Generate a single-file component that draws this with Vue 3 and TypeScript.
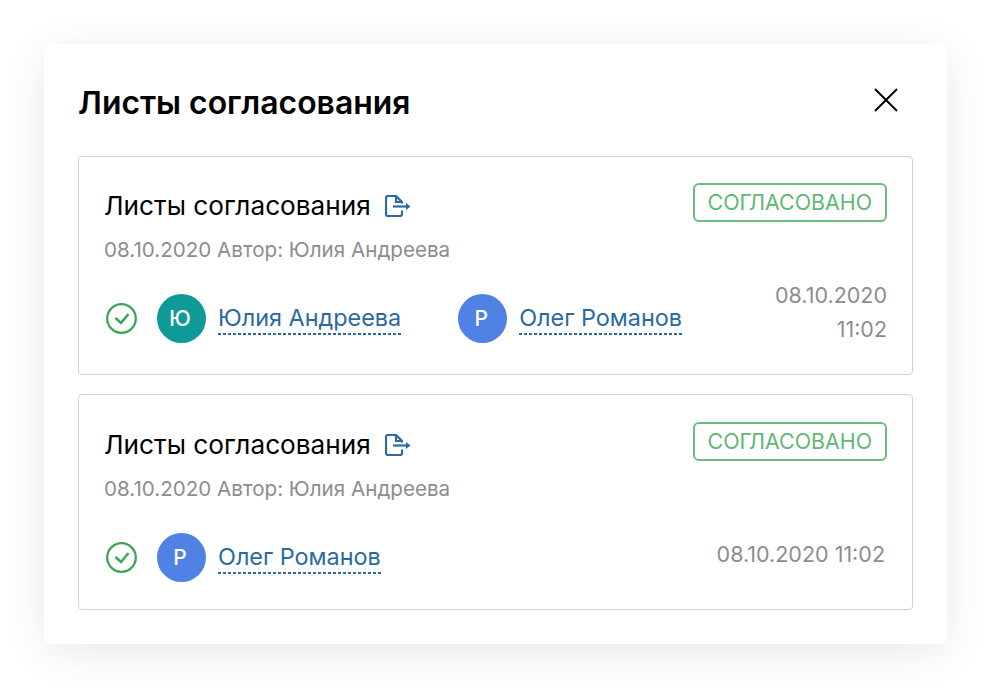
<template>
  <div class="page">
    <div class="modal">
      <div class="modal-head">
        <h1>Листы согласования</h1>
        <button class="close" aria-label="Закрыть">
          <svg width="26" height="26" viewBox="0 0 26 26" fill="none" stroke="#000" stroke-width="2">
            <path d="M2 2 L24 24 M24 2 L2 24" />
          </svg>
        </button>
      </div>

      <div v-for="(sheet, i) in sheets" :key="i" class="card">
        <div class="card-top">
          <div>
            <div class="card-title">
              <span>Листы согласования</span>
              <svg class="export" width="26" height="22" viewBox="0 0 26 22" fill="none" stroke="#2a6ba3" stroke-width="2.2">
                <path d="M17 15.5 V19 Q17 21 15 21 H3 Q1 21 1 19 V3 Q1 1 3 1 H11 L17 7 V8.5" />
                <path d="M11 1 V7 H17" />
                <path d="M8 11.5 H21" />
                <path d="M21 8 L25.5 11.5 L21 15 Z" fill="#2a6ba3" stroke="none" />
              </svg>
            </div>
            <div class="meta">08.10.2020 Автор: Юлия Андреева</div>
          </div>
          <div class="status">СОГЛАСОВАНО</div>
        </div>

        <div class="card-bottom">
          <svg class="check" width="31" height="31" viewBox="0 0 31 31" fill="none" stroke="#3fa55b" stroke-width="2.3">
            <circle cx="15.5" cy="15.5" r="14.3" />
            <path d="M9.5 15 L15 20 L22.5 11" stroke-width="2.6" />
          </svg>
          <div class="people">
            <div v-for="p in sheet.people" :key="p.name" class="person">
              <div class="avatar" :style="{ background: p.color }">{{ p.letter }}</div>
              <span class="name">{{ p.name }}</span>
            </div>
          </div>
          <div class="time" :class="{ stacked: sheet.time.length > 1 }">
            <div v-for="t in sheet.time" :key="t">{{ t }}</div>
          </div>
        </div>
      </div>
    </div>
  </div>
</template>

<script setup lang="ts">
type Person = {
  name: string;
  letter: string;
  color: string;
};

type Sheet = {
  people: Person[];
  time: string[];
};

const yulia: Person = { name: "Юлия Андреева", letter: "Ю", color: "#0f9a98" };
const oleg: Person = { name: "Олег Романов", letter: "Р", color: "#5082e6" };

const sheets: Sheet[] = [
  { people: [yulia, oleg], time: ["08.10.2020", "11:02"] },
  { people: [oleg], time: ["08.10.2020 11:02"] },
];
</script>

<style>
html,
body {
  margin: 0;
  background: #fff;
}
</style>

<style scoped>
.page {
  width: 991px;
  height: 689px;
  padding: 44px;
  box-sizing: border-box;
  font-family: Inter, "Noto Sans", sans-serif;
  overflow: hidden;
}

.modal {
  width: 903px;
  height: 600px;
  box-sizing: border-box;
  padding: 0 34px;
  background: #fff;
  border-radius: 8px;
  box-shadow: 0 8px 44px rgba(0, 0, 0, 0.09);
}

.modal-head {
  height: 112px;
  display: flex;
  justify-content: space-between;
  align-items: flex-start;
}

h1 {
  margin: 40px 0 0;
  font-size: 31.9px;
  line-height: 38px;
  font-weight: 600;
  color: #000;
}

.close {
  margin: 43px 14px 0 0;
  padding: 0;
  border: none;
  background: none;
  line-height: 0;
}

.card {
  box-sizing: border-box;
  height: 219px;
  margin-bottom: 19px;
  padding: 27px 25px 0;
  border: 1px solid #d2d2d2;
  border-radius: 4px;
}

.card + .card {
  height: 216px;
  margin-bottom: 0;
  padding-top: 28px;
}

.card-top {
  display: flex;
  justify-content: space-between;
  align-items: flex-start;
}

.card-title {
  display: flex;
  align-items: center;
  gap: 14px;
  font-size: 26.2px;
  line-height: 44px;
  color: #000;
}

.meta {
  margin-top: 8px;
  font-size: 20.6px;
  line-height: 28px;
  color: #8d8d8d;
}

.status {
  box-sizing: border-box;
  height: 39px;
  margin-top: -1px;
  padding: 0 13px;
  border: 2px solid #6dbb7e;
  border-radius: 6px;
  font-size: 21.4px;
  line-height: 35px;
  color: #62b774;
}

.card-bottom {
  display: flex;
  align-items: center;
  min-height: 82px;
  margin-top: 13px;
}

.check {
  flex: none;
  margin: 0 20px 0 2px;
}

.people {
  flex: 1;
  display: flex;
  gap: 57px;
}

.person {
  display: flex;
  align-items: center;
  gap: 12px;
}

.avatar {
  width: 49px;
  height: 49px;
  padding-right: 3px;
  box-sizing: border-box;
  border-radius: 50%;
  display: flex;
  align-items: center;
  justify-content: center;
  font-size: 21px;
  font-weight: 500;
  color: #fff;
}

.name {
  padding-top: 2px;
  padding-bottom: 3px;
  font-size: 23.4px;
  line-height: 28px;
  color: #2b6a9e;
  background: linear-gradient(to right, #2b6a9e 3px, transparent 3px) left bottom / 5px 2px repeat-x;
}

.time {
  margin-bottom: 6px;
  padding-right: 2px;
  text-align: right;
  font-size: 21.5px;
  line-height: 34px;
  color: #8d8d8d;
}

.time.stacked {
  margin-bottom: 12px;
  padding-right: 0;
}
</style>
